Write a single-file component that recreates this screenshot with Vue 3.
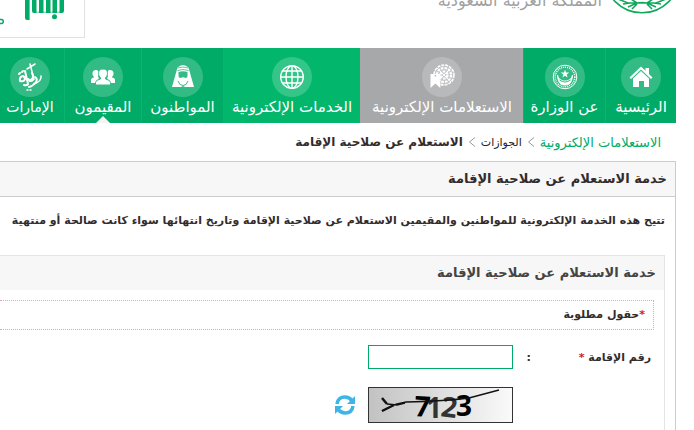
<script setup>
import { ref } from 'vue'

const iqama = ref('')

const items = [
  { id: 'home', label: 'الرئيسية' },
  { id: 'ministry', label: 'عن الوزارة' },
  { id: 'inquiries', label: 'الاستعلامات الإلكترونية' },
  { id: 'services', label: 'الخدمات الإلكترونية' },
  { id: 'citizens', label: 'المواطنون' },
  { id: 'residents', label: 'المقيمون' },
  { id: 'regions', label: 'الإمارات' },
]
</script>

<template>
  <div class="page" dir="rtl">
    <header class="header">
      <svg class="emblem" width="68" height="15" viewBox="0 0 68 15" fill="none" stroke="#12a85c">
        <circle cx="34" cy="-24.700" r="37.500" stroke-width="1.600" />
        <path d="M10-1l10 4h28l10-4M15 4l7-1M20 7l9-4 5-.5 5 .5 9 4M24 9l5-5M44 9l-5-5M53 4l-7-1M23-1l6 4M45-1l-6 4" stroke-width="1.600" />
      </svg>
      <div class="kingdom">المملكة العربية السعودية</div>
      <a class="absher" href="#" aria-label="أبشر">
        <svg width="84" height="37" viewBox="0 0 84 37" fill="#00ab67">
          <path d="M25-4h4.600v24H27q-2 0-2-2zM32-4h4.500v17H34q-2 0-2-2zM39-4h4.500v17H39zM46-4h4.500v17H46zM52.500-4H57v17h-4.500zM59.500-4H64v15q0 2-2 2h-2.500z" />
          <path d="M34 11.500h28V13H34z" opacity=".4" />
          <circle cx="54.500" cy="16.800" r="2.500" />
          <path d="M0 19.500h1.500q1.800 0 1.800 2t-1.800 2H0" fill="none" stroke="#00ab67" stroke-width="1.500" />
        </svg>
      </a>
    </header>

    <nav class="nav">
      <a v-for="item in items" :key="item.id" href="#" class="nav-item" :class="item.id">
        <span class="circle">
          <svg v-if="item.id === 'home'" width="40" height="40" viewBox="0 0 40 40" fill="#fff">
            <path d="M8.500 20.500L20 9.500l4.500 4.300V11H28v6l3.500 3.500-1.500 1.500-10-9.500L10 22z" />
            <path d="M12 21.500l8-7.500 8 7.500V30h-5v-6h-5v6h-6z" />
          </svg>
          <svg v-else-if="item.id === 'ministry'" width="40" height="40" viewBox="0 0 40 40" fill="none" stroke="#fff">
            <circle cx="20" cy="20" r="11.800" stroke-width="1" />
            <circle cx="20" cy="20" r="9.800" stroke-width="1.500" stroke-dasharray="1 1" />
            <path d="M12.500 18c1 8 14 8 15 0-.5 9-4 10-7.500 10s-7-1-7.500-10z" fill="#fff" />
            <path d="M14.500 23q5.500 4 11 0" stroke="#35bb85" />
            <path d="M20 12.500l1 3 3.200.1-2.500 1.900.9 3-2.600-1.700-2.600 1.700.9-3-2.500-1.900 3.200-.1z" fill="#fff" stroke="none" />
          </svg>
          <svg v-else-if="item.id === 'inquiries'" width="40" height="40" viewBox="0 0 40 40" fill="none" stroke="#fff">
            <circle cx="22" cy="18" r="10" fill="#fff" fill-opacity=".2" stroke-width="1.500" stroke-dasharray="3 1" />
            <circle cx="22" cy="18" r="7" stroke-width="2.200" stroke-dasharray="2.500 1.200" />
            <circle cx="22" cy="18" r="3.500" stroke-width="2.200" stroke-dasharray="2.500 1.200" />
            <path d="M15 11l14 14M29 11L15 25" stroke-width="1" />
            <path d="M8.500 17h9.800v14L13.400 26.500 8.500 31z" fill="#fff" stroke="none" />
            <circle cx="13.400" cy="18.800" r=".8" fill="#a7a8aa" stroke="none" />
          </svg>
          <svg v-else-if="item.id === 'services'" width="40" height="40" viewBox="0 0 40 40" fill="none" stroke="#fff" stroke-width="1.400">
            <circle cx="20" cy="20" r="11.300" />
            <ellipse cx="20" cy="20" rx="6" ry="11.300" />
            <path d="M20 8.500v23M8.500 20h23M10.500 14h19M10.500 26h19" />
          </svg>
          <svg v-else-if="item.id === 'citizens'" width="40" height="40" viewBox="0 0 40 40">
            <path d="M14.500 10.500q5.500-5 11 0L31 30h-9l-2-1-2 1H9z" fill="#fff" />
            <path d="M15.500 15q4.500-1.500 9 0v5q-1.500 4-4.500 4t-4.500-4z" fill="#35bb85" />
            <path d="M14.500 11q5.500-2 11 0M14.500 13.500q5.500-2 11 0" fill="none" stroke="#35bb85" stroke-width=".8" />
            <path d="M15 19q1 2 2.500 2 2.500-1.500 5 0 1.500 0 2.500-2 0 6-5 6t-5-6z" fill="#fff" />
            <path d="M15 24l2 3.500 3 1 3-1 2-3.500" fill="none" stroke="#35bb85" stroke-width="1" />
          </svg>
          <svg v-else-if="item.id === 'residents'" width="40" height="40" viewBox="0 0 40 40" fill="#fff">
            <path d="M12.500 13c3 0 3.500 2 3.200 4.500L15 20l1 1-3 5H8v-3q0-2 3-2.500V20q-2-2-1.500-4.500.5-2.500 3-2.500zM27.500 13c-3 0-3.500 2-3.200 4.500L25 20l-1 1 3 5h5v-3q0-2-3-2.500V20q2-2 1.500-4.500-.5-2.500-3-2.500z" />
            <path d="M20 12c4.500 0 5 3.500 4 7l-1.500 2v1q5 1 5 3.500V28h-15v-2.500q0-2.500 5-3.500v-1L16 19c-1-3.500-.5-7 4-7z" stroke="#35bb85" stroke-width="1" />
          </svg>
          <svg v-else width="40" height="40" viewBox="0 0 40 40" fill="none" stroke="#fff" stroke-linecap="round">
            <path d="M31 19q1 5-7 8M20 7l4 15q-2 3-5 2M17 12l8-5" stroke-width="1.500" />
            <path d="M22 16q2 4 0 6-2 2-4 0M15 14l3 13q-1 2-4 1M13 19q-4 1-3 5 4 1 5-2 0-2-2-3M9 17l1-1M12 15l1-1M25 20q3 2 1 5-3 4-7 5" stroke-width="2" />
            <path d="M20 33l1 0M17 33l1 0" stroke-width="1.500" />
          </svg>
        </span>
        <span class="nav-label">{{ item.label }}</span>
      </a>
    </nav>

    <div class="crumbs">
      <a href="#" class="crumb-root">الاستعلامات الإلكترونية</a>
      <svg width="8" height="10" viewBox="0 0 8 10" fill="none" stroke="#999"><path d="M7 .5L1.500 5 7 9.500" /></svg>
      <a href="#" class="crumb-link">الجوازات</a>
      <svg width="8" height="10" viewBox="0 0 8 10" fill="none" stroke="#999"><path d="M7 .5L1.500 5 7 9.500" /></svg>
      <strong>الاستعلام عن صلاحية الإقامة</strong>
    </div>

    <main class="panel">
      <h1 class="panel-title">خدمة الاستعلام عن صلاحية الإقامة</h1>
      <p class="intro">تتيح هذه الخدمة الإلكترونية للمواطنين والمقيمين الاستعلام عن صلاحية الإقامة وتاريخ انتهائها سواء كانت صالحة أو منتهية</p>

      <form class="form" @submit.prevent>
        <h2 class="form-title">خدمة الاستعلام عن صلاحية الإقامة</h2>
        <div class="required"><span class="star">*</span>حقول مطلوبة</div>
        <div class="row">
          <label for="iqama">رقم الإقامة <span class="star">*</span></label>
          <span>:</span>
          <input id="iqama" v-model="iqama" class="input" type="text" />
        </div>
        <div class="row captcha-row">
          <svg class="captcha" viewBox="0 0 145 36" role="img" aria-label="7123">
            <defs>
              <linearGradient id="shade">
                <stop offset="0" stop-color="#c2c2c2" />
                <stop offset="1" stop-color="#fafafa" />
              </linearGradient>
            </defs>
            <rect x=".5" y=".5" width="144" height="35" fill="url(#shade)" stroke="#333" />
            <g class="digits">
              <text x="46" y="29" transform="rotate(3 46 29)">7</text>
              <text x="58" y="31" fill="#333">1</text>
              <text x="72" y="29" transform="rotate(8 72 29)" fill="#333">2</text>
              <text x="88" y="29">3</text>
            </g>
            <path d="M14 24l14-7 10-2q40-1 63-4l30-8M19 17l10 1 8-2" fill="none" stroke="#111" stroke-width="1.300" />
            <path d="M14 11l5 6M14 24l12-6" stroke="#111" stroke-width="2.500" />
          </svg>
          <button class="refresh" type="button" aria-label="تحديث">
            <svg width="20" height="20" viewBox="0 0 20 20">
              <path d="M2 9Q3 2 10 2q4 0 7 3.500M18 11Q17 18 10 18q-4 0-7-3.500" fill="none" stroke="#3db5e6" stroke-width="3.500" />
              <path d="M20 1v8h-8zM0 19v-8h8z" fill="#3db5e6" />
            </svg>
          </button>
        </div>
      </form>
    </main>
  </div>
</template>

<style>
body { overflow: hidden; background: #fff; }
</style>

<style scoped>
* { box-sizing: border-box; }
.page { height: 100vh; display: flex; flex-direction: column; padding-right: 18px; overflow: hidden; font-family: "DejaVu Sans", sans-serif; color: #332c2b; }
a { text-decoration: none; color: inherit; }

.header { flex: none; height: 48px; display: flex; align-items: flex-start; overflow: hidden; }
.emblem { flex: none; }
.kingdom { margin-right: 6px; margin-top: -12px; font-size: 16px; line-height: 26px; color: #a0a0a0; white-space: nowrap; }
.absher { margin-right: auto; border: solid #e2e2e2; border-width: 0 1px 1px 0; }
.absher svg { display: block; }

.nav { flex: none; display: grid; grid-template-columns: 71fr 82fr 163fr 137fr 82fr 77fr 64fr; height: 75px; background: #00ab67; color: #fff; }
.nav-item { position: relative; min-width: 0; display: flex; flex-direction: column; align-items: center; padding-top: 9px; border-left: 1px solid #08b56e; }
.nav-item.inquiries { background: #a7a8aa; border-color: #a7a8aa; }
.nav-item.services { background: #02b76c; }
.nav-item.regions { padding-right: 4px; border-left: 0; }
.circle { width: 40px; height: 40px; border-radius: 50%; background: rgba(255, 255, 255, 0.2); }
.circle svg { display: block; }
.nav-label { font-size: 15px; line-height: 20px; white-space: nowrap; }
.regions .nav-label { font-size: 14px; }
.residents::after { content: ""; position: absolute; bottom: 0; left: 50%; margin-left: -7px; border: 7px solid transparent; border-top: 0; border-bottom-color: #f4f4f4; }

.crumbs { flex: none; height: 38px; display: flex; align-items: center; gap: 5px; padding-right: 15px; font-size: 13px; white-space: nowrap; }
.crumb-root { color: #00ab67; }
.crumb-link { font-size: 11px; color: #222; }
.crumbs strong { font-size: 12px; }

.panel { flex: 1; border: solid #ccc; border-width: 1px 1px 0 0; }
.panel-title { margin: 0; height: 35px; padding-right: 8px; border-bottom: 1px solid #ccc; background: #f7f7f7; font-size: 13px; line-height: 34px; }
.intro { margin: 0; padding: 14px 10px 24px 0; font-size: 11px; font-weight: bold; line-height: 20px; white-space: nowrap; overflow: hidden; }
.form { margin-right: 10px; height: 100%; border: solid #e4e4e4; border-width: 1px 1px 0 0; font-size: 11px; font-weight: bold; }
.form-title { margin: 0 0 10px; height: 34px; padding-right: 8px; background: #f7f7f7; color: #444; font-size: 13px; line-height: 34px; }
.required { margin-right: 10px; height: 30px; padding-right: 8px; border: 1px dotted #e5a5b2; border-left: 0; line-height: 28px; }
.star { color: #d41c1c; }
.row { display: grid; grid-template-columns: 120px 18px 145px auto; align-items: center; margin-top: 15px; padding-right: 13px; }
.input { width: 100%; height: 24px; padding: 0 5px; border: 1px solid #00ab67; background: #fff; font-size: 12px; outline: none; }
.captcha-row { margin-top: 18px; }
.captcha { grid-column: 3; width: 100%; display: block; }
.digits { font-family: "Open Sans", sans-serif; font-size: 28px; font-weight: bold; direction: ltr; }
.refresh { justify-self: start; margin-right: 13px; padding: 0; border: 0; background: none; cursor: pointer; }
.refresh svg { display: block; }
</style>
